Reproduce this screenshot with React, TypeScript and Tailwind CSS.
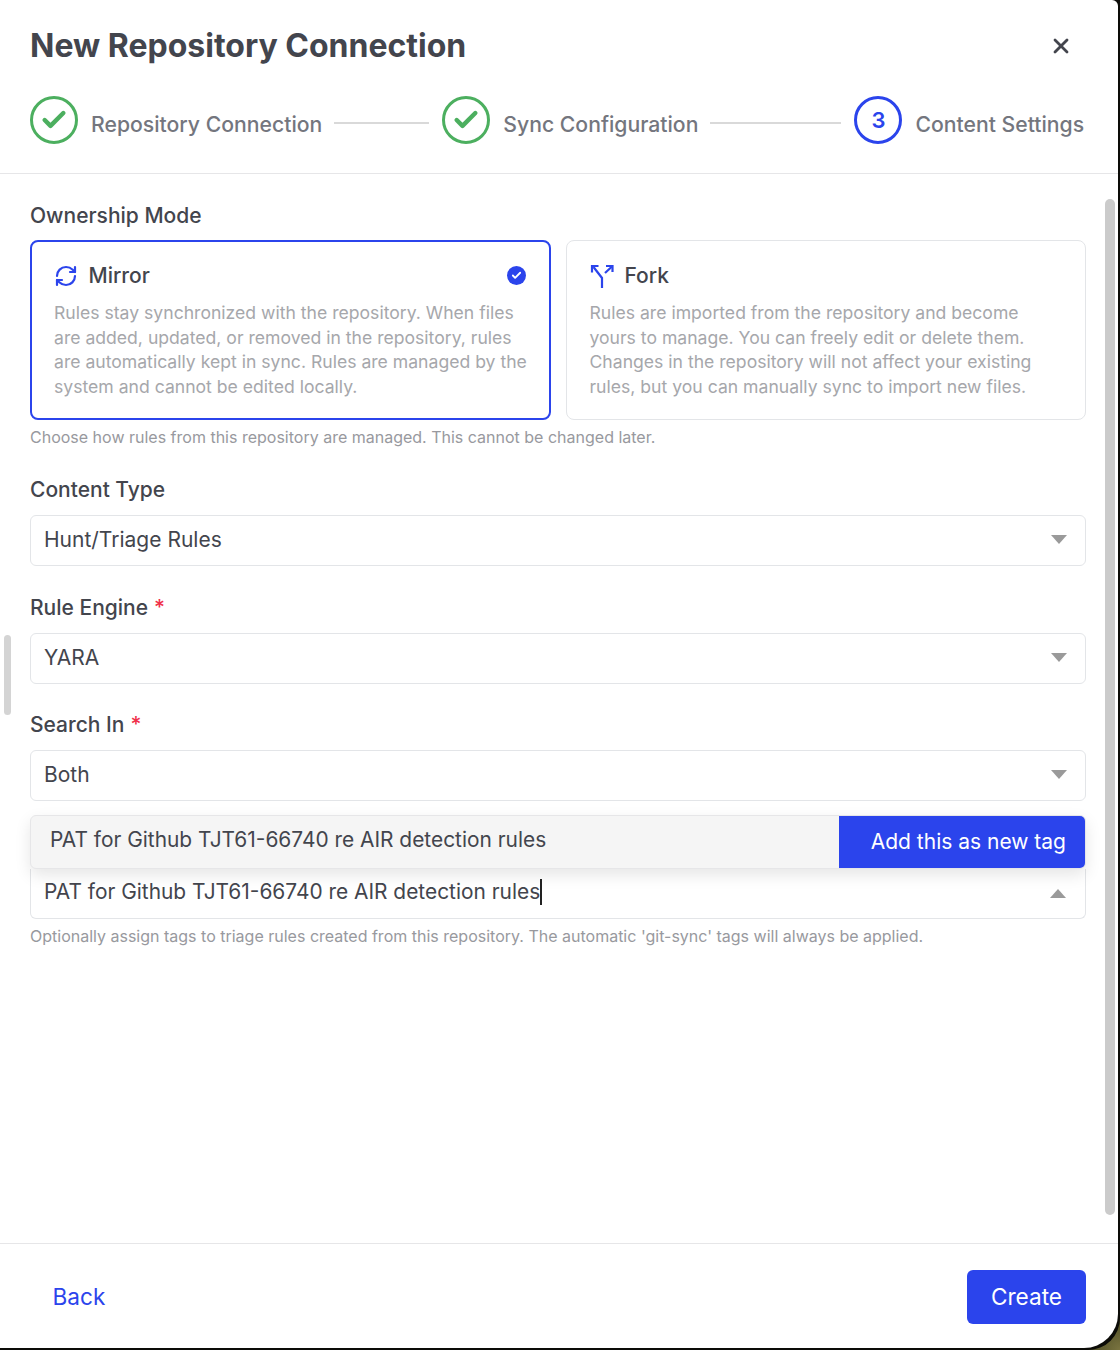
import { Check, RefreshCw, X } from "lucide-react";

const inter = "[font-family:Inter,'Noto_Sans',sans-serif]";

function StepDone({ label }: { label: string }) {
  return (
    <div className="flex items-center shrink-0">
      <div className="w-12 h-12 rounded-full border-[3px] border-[#4caf5f] flex items-center justify-center">
        <Check className="w-7 h-7 text-[#4caf5f]" strokeWidth={3.8} />
      </div>
      <span className="ml-[13px] mt-[7px] text-[21.2px] leading-[30px] font-medium text-[#74767e]">{label}</span>
    </div>
  );
}

function StepLine({ width }: { width: string }) {
  return <div className={`h-[2px] bg-[#d9d9d9] ml-3 mr-[13px] mt-[6px] ${width}`} />;
}

function Caret({ up }: { up?: boolean }) {
  return (
    <svg width="16" height="9" viewBox="0 0 16 9" className={up ? "shrink-0 mt-[4px]" : "shrink-0"}>
      <path d={up ? "M0 9 L8 0 L16 9 Z" : "M0 0 L16 0 L8 9 Z"} fill="#9a9a9a" />
    </svg>
  );
}

function FieldLabel({ children, required }: { children: string; required?: boolean }) {
  return (
    <div className="text-[21px] leading-[28px] font-medium text-[#43454d]">
      {children}
      {required && <span className="text-[#f0304a] ml-[6px]">*</span>}
    </div>
  );
}

function SelectBox({ value }: { value: string }) {
  return (
    <div className="mt-[11px] h-[51px] border border-[#e3e5e8] rounded-[6px] pl-[13px] pr-[18px] pb-[2px] flex items-center justify-between">
      <span className="text-[21px] text-[#43454d]">{value}</span>
      <Caret />
    </div>
  );
}

function ForkIcon() {
  return (
    <svg width="24" height="24" viewBox="0 0 24 24" fill="none" stroke="#2b44ec" strokeWidth="2.2" className="shrink-0">
      <path d="M12 24 V14 L3.5 3" />
      <path d="M2 8.5 L2 2 L8.5 2" />
      <path d="M15 9 L22 2.5" />
      <path d="M16 2 L22.5 2 L22.5 8" />
    </svg>
  );
}

export default function App() {
  return (
    <div className={`w-[1120px] h-[1350px] bg-[#0c0c08] relative overflow-hidden ${inter}`}>
      <div className="w-[1118px] h-[1348px] bg-white rounded-br-[34px] rounded-tr-[6px] flex flex-col">
        <div className="h-[174px] border-b border-[#e6e6e8] pl-[30px] pr-[32px] shrink-0">
          <div className="flex items-center justify-between pt-[22px] h-[70px]">
            <h1 className="text-[32px] leading-[44px] font-bold text-[#43454d]">New Repository Connection</h1>
            <X className="w-[24px] h-[24px] text-[#43454d] mr-[13px]" strokeWidth={2.8} />
          </div>
          <div className="flex items-center mt-[26px]">
            <StepDone label="Repository Connection" />
            <StepLine width="w-[95px]" />
            <StepDone label="Sync Configuration" />
            <StepLine width="w-[131px]" />
            <div className="flex items-center shrink-0">
              <div className="w-12 h-12 rounded-full border-[3px] border-[#2b44ec] flex items-center justify-center text-[22px] font-semibold text-[#2b44ec]">
                3
              </div>
              <span className="ml-[13px] mt-[7px] text-[21.2px] leading-[30px] font-medium text-[#74767e]">Content Settings</span>
            </div>
          </div>
        </div>

        <div className="flex-1 pl-[30px] pr-[32px] pt-[28px]">
          <FieldLabel>Ownership Mode</FieldLabel>
          <div className="grid grid-cols-2 gap-[15px] mt-[10px]">
            <div className="h-[180px] border-2 border-[#2b44ec] rounded-[8px] pl-[22px] pr-[23px] pt-[21px]">
              <div className="flex items-center justify-between">
                <div className="flex items-center gap-[10.5px]">
                  <RefreshCw className="w-[24px] h-[24px] text-[#2b44ec]" strokeWidth={2.2} />
                  <span className="text-[21px] leading-[26px] font-medium text-[#43454d]">Mirror</span>
                </div>
                <div className="w-[19px] h-[19px] mb-[2px] rounded-full bg-[#2b44ec] flex items-center justify-center">
                  <Check className="w-[11px] h-[11px] text-white" strokeWidth={4} />
                </div>
              </div>
              <p className="mt-[12px] -mr-[6px] text-[17.6px] leading-[24.7px] text-[#a6a7ab]">
                Rules stay synchronized with the repository. When files are added, updated, or removed in the repository, rules are automatically kept in sync. Rules are managed by the system and cannot be edited locally.
              </p>
            </div>
            <div className="h-[180px] border border-[#e3e5e8] rounded-[8px] pl-[23px] pr-[22px] pt-[22px]">
              <div className="flex items-center gap-[11px]">
                <ForkIcon />
                <span className="text-[21px] leading-[26px] font-medium text-[#43454d]">Fork</span>
              </div>
              <p className="mt-[12px] text-[17.6px] leading-[24.7px] text-[#a6a7ab]">
                Rules are imported from the repository and become yours to manage. You can freely edit or delete them. Changes in the repository will not affect your existing rules, but you can manually sync to import new files.
              </p>
            </div>
          </div>
          <p className="mt-[6px] text-[16px] leading-[22px] text-[#98999e]">
            Choose how rules from this repository are managed. This cannot be changed later.
          </p>

          <div className="mt-[28px]">
            <FieldLabel>Content Type</FieldLabel>
            <SelectBox value="Hunt/Triage Rules" />
          </div>
          <div className="mt-[28px]">
            <FieldLabel required>Rule Engine</FieldLabel>
            <SelectBox value="YARA" />
          </div>
          <div className="mt-[27px]">
            <FieldLabel required>Search In</FieldLabel>
            <SelectBox value="Both" />
          </div>

          <div className="mt-[14px] relative z-10 h-[54px] flex rounded-[6px] overflow-hidden border border-[#e6e6e8] bg-[#f5f5f5] shadow-[0_6px_16px_rgba(0,0,0,0.1)]">
            <div className="flex-1 pl-[19px] flex items-center text-[20.9px] text-[#43454d] pb-[5px]">
              PAT for Github TJT61-66740 re AIR detection rules
            </div>
            <div className="w-[246px] bg-[#2b44ec] text-white text-[21px] flex items-center justify-end pr-[19px]">
              Add this as new tag
            </div>
          </div>
          <div className="h-[50px] border border-t-0 border-[#e3e5e8] rounded-b-[6px] pl-[13px] pr-[19px] pb-[4px] flex items-center justify-between">
            <span className="text-[20.9px] text-[#43454d] border-r-2 border-[#222] leading-[26px]">
              PAT for Github TJT61-66740 re AIR detection rules
            </span>
            <Caret up />
          </div>
          <p className="mt-[6px] text-[16px] leading-[22px] text-[#98999e]">
            Optionally assign tags to triage rules created from this repository. The automatic 'git-sync' tags will always be applied.
          </p>
        </div>

        <div className="h-[105px] border-t border-[#e6e6e8] shrink-0 pl-[52.5px] pr-[32px] pt-[2px] flex items-center justify-between">
          <span className="text-[22.6px] text-[#2b44ec]">Back</span>
          <button className="w-[119px] h-[54px] rounded-[6px] bg-[#2b44ec] text-white text-[22.6px]">Create</button>
        </div>
      </div>

      {/* scrollbars sit over the content */}
      <div className="absolute left-[4px] top-[635px] w-[7px] h-[80px] rounded-full bg-[#d4d4d4]" />
      <div className="absolute left-[1105px] top-[199px] w-[10px] h-[1016px] rounded-full bg-[#cbcbcb]" />
      <div className="absolute right-0 bottom-0 w-[32px] h-[32px] bg-[radial-gradient(circle_at_100%_100%,#7a7440_0%,#56542a_55%,#1a1a0e_85%)] [clip-path:path('M32_0_L32_32_L0_32_A32_32_0_0_0_32_0_Z')]" />
    </div>
  );
}
